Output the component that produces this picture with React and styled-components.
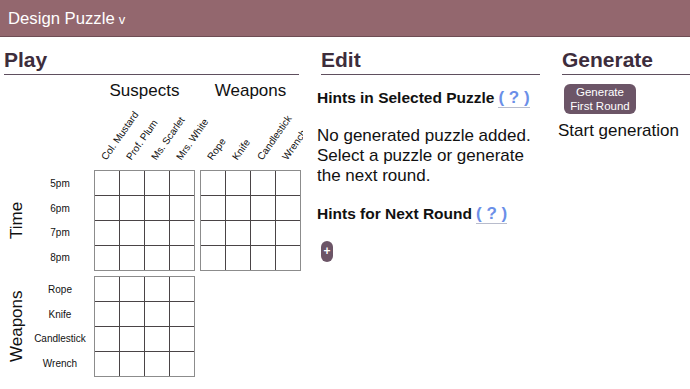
import React from 'react';
import styled, { createGlobalStyle } from 'styled-components';

const Global = createGlobalStyle`
  html, body { margin: 0; padding: 0; background: #fff; }
  body { font-family: "Liberation Sans", Arial, Helvetica, sans-serif; color: #111; }
  * { box-sizing: border-box; }
`;

const TopBar = styled.header`
  height: 37px;
  background: #93676e;
  border-bottom: 1px solid #6e4d54;
  display: flex;
  align-items: center;
  padding: 2px 8px 0;
  color: #fff;
  font-size: 16.7px;
`;

const Caret = styled.span`
  font-size: 13px;
  margin-left: 4px;
`;

const Main = styled.main`
  display: flex;
  gap: 14px;
  align-items: flex-start;
  overflow: hidden;
`;

const Section = styled.section`
  flex: 0 0 ${(p) => p.$w}px;
  width: ${(p) => p.$w}px;
  overflow: hidden;
`;

const Heading = styled.h2`
  margin: 11px 4px 0;
  padding-bottom: 2px;
  font-size: 21px;
  line-height: 24px;
  font-weight: bold;
  color: #3d2d3c;
  border-bottom: 1px solid #5f4f5e;
`;

const Board = styled.div`
  display: grid;
  grid-template-columns: 34px 60px 106px 101px;
  grid-template-rows: 20px 69px 106px 101px;
  margin-top: 6px;
`;

const Category = styled.div`
  grid-column: ${(p) => p.$col};
  grid-row: 1;
  width: 101px;
  text-align: center;
  font-size: 17px;
  line-height: 20px;
`;

const ColLabels = styled.div`
  grid-column: ${(p) => p.$col};
  grid-row: 2;
  display: grid;
  grid-template-columns: repeat(4, 25px);
`;

const ColLabel = styled.div`
  display: flex;
  align-items: flex-end;
  height: 69px;
`;

const ColText = styled.span`
  flex-shrink: 0;
  white-space: nowrap;
  font-size: 10px;
  line-height: 11px;
  margin: 0 0 8px 14px;
  transform-origin: 0 100%;
  transform: rotate(-55deg);
`;

const SideLabel = styled.div`
  grid-column: 1;
  grid-row: ${(p) => p.$row};
  height: 101px;
  display: flex;
  align-items: center;
  justify-content: center;
  font-size: 17px;
  writing-mode: vertical-rl;
  transform: rotate(180deg);
`;

const RowLabels = styled.div`
  grid-column: 2;
  grid-row: ${(p) => p.$row};
  height: 101px;
  display: grid;
  grid-template-rows: repeat(4, 1fr);
  padding: 1px 8px 1px 0;
`;

const RowLabel = styled.div`
  display: flex;
  align-items: center;
  justify-content: center;
  font-size: 10px;
  white-space: nowrap;
`;

const Grid = styled.div`
  grid-column: ${(p) => p.$col};
  grid-row: ${(p) => p.$row};
  align-self: start;
  justify-self: start;
  display: grid;
  grid-template-columns: repeat(4, 24px);
  grid-auto-rows: 24px;
  gap: 1px;
  background: #4a4446;
  border: 1px solid #8c8c8c;
`;

const Cell = styled.div`
  background: #fff;
`;

const HintTitle = styled.h3`
  margin: ${(p) => p.$mt}px 0 0;
  font-size: 15.5px;
  line-height: 18px;
  font-weight: bold;
  color: #111;
`;

const Help = styled.span`
  margin-left: 4px;
  font-size: 17px;
  line-height: 18px;
  color: #6b8fe8;
  border-bottom: 1px solid #b8bccc;
`;

const Para = styled.p`
  margin: ${(p) => p.$mt}px 0 0;
  font-size: 17px;
  line-height: 20px;
  color: #111;
`;

const AddButton = styled.button`
  display: block;
  margin: 18px 0 0 4px;
  width: 12px;
  height: 21px;
  padding: 0;
  border: none;
  border-radius: 6px;
  background: #6c5567;
  color: #fff;
  font-family: inherit;
  font-size: 12px;
  font-weight: bold;
  line-height: 21px;
  text-align: center;
`;

const GenButton = styled.button`
  display: block;
  margin: 9px 0 0 6px;
  width: 72px;
  height: 30px;
  padding: 1px 0;
  border: none;
  border-radius: 6px;
  background: #6c5567;
  color: #fff;
  font-family: inherit;
  font-size: 11.5px;
  line-height: 14px;
  text-align: center;
`;

const suspects = ['Col. Mustard', 'Prof. Plum', 'Ms. Scarlet', 'Mrs. White'];
const weapons = ['Rope', 'Knife', 'Candlestick', 'Wrench'];
const times = ['5pm', '6pm', '7pm', '8pm'];

const CellGrid = ({ col, row }) => (
  <Grid $col={col} $row={row}>
    {Array.from({ length: 16 }).map((_, i) => (
      <Cell key={i} />
    ))}
  </Grid>
);

export default function App() {
  return (
    <>
      <Global />
      <TopBar>
        Design Puzzle<Caret>v</Caret>
      </TopBar>
      <Main>
        <Section $w={303}>
          <Heading>Play</Heading>
          <Board>
            <Category $col={3}>Suspects</Category>
            <Category $col={4}>Weapons</Category>
            <ColLabels $col={3}>
              {suspects.map((s) => (
                <ColLabel key={s}>
                  <ColText>{s}</ColText>
                </ColLabel>
              ))}
            </ColLabels>
            <ColLabels $col={4}>
              {weapons.map((s) => (
                <ColLabel key={s}>
                  <ColText>{s}</ColText>
                </ColLabel>
              ))}
            </ColLabels>
            <SideLabel $row={3}>Time</SideLabel>
            <RowLabels $row={3}>
              {times.map((t) => (
                <RowLabel key={t}>{t}</RowLabel>
              ))}
            </RowLabels>
            <CellGrid col={3} row={3} />
            <CellGrid col={4} row={3} />
            <SideLabel $row={4}>Weapons</SideLabel>
            <RowLabels $row={4}>
              {weapons.map((t) => (
                <RowLabel key={t}>{t}</RowLabel>
              ))}
            </RowLabels>
            <CellGrid col={3} row={4} />
          </Board>
        </Section>
        <Section $w={227}>
          <Heading>Edit</Heading>
          <HintTitle $mt={14}>
            Hints in Selected Puzzle<Help>( ? )</Help>
          </HintTitle>
          <Para $mt={19}>
            No generated puzzle added. Select a puzzle or generate the next round.
          </Para>
          <HintTitle $mt={19}>
            Hints for Next Round<Help>( ? )</Help>
          </HintTitle>
          <AddButton>+</AddButton>
        </Section>
        <Section $w={160}>
          <Heading>Generate</Heading>
          <GenButton>
            Generate
            <br />
            First Round
          </GenButton>
          <Para $mt={7}>Start generation</Para>
        </Section>
      </Main>
    </>
  );
}
